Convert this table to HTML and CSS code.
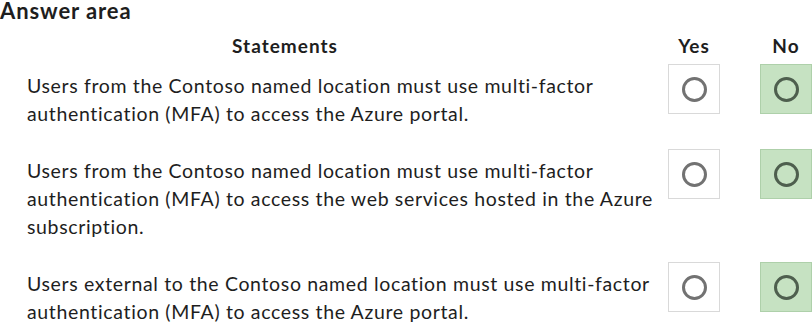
FILE: index.html
```html
<!DOCTYPE html>
<html lang="en">
<head>
<meta charset="UTF-8">
<meta name="viewport" content="width=device-width, initial-scale=1.0">
<title>Answer area</title>
<link rel="stylesheet" href="styles.css">
</head>
<body>

<h2 class="title">Answer area</h2>

<div class="answer-table">
  <div class="head head-statement">Statements</div>
  <div class="head">Yes</div>
  <div class="head">No</div>

  <div class="statement">Users from the Contoso named location must use multi-factor<br>
    authentication (MFA) to access the Azure portal.</div>
  <div class="choice"><span class="radio"></span></div>
  <div class="choice selected"><span class="radio"></span></div>

  <div class="statement">Users from the Contoso named location must use multi-factor<br>
    authentication (MFA) to access the web services hosted in the Azure<br>
    subscription.</div>
  <div class="choice"><span class="radio"></span></div>
  <div class="choice selected"><span class="radio"></span></div>

  <div class="statement">Users external to the Contoso named location must use multi-factor<br>
    authentication (MFA) to access the Azure portal.</div>
  <div class="choice"><span class="radio"></span></div>
  <div class="choice selected"><span class="radio"></span></div>
</div>

</body>
</html>
```

FILE: styles.css
```css
body {
  font-family: Lato, "Open Sans", sans-serif;
  margin: 0;
  background-color: #fff;
  color: #1e1e1e;
  font-variant-ligatures: none;
}

.title {
  font-size: 22px;
  line-height: 22px;
  margin: 0;
  letter-spacing: 0.9px;
}

.answer-table {
  display: grid;
  grid-template-columns: minmax(0, 1fr) 52px 52px;
  column-gap: 40px;
  row-gap: 21px;
  align-items: start;
  margin-top: 13px;
}

.head {
  font-size: 19px;
  font-weight: bold;
  line-height: 22px;
  letter-spacing: 1px;
  text-align: center;
  margin-bottom: -14px;
}

.head-statement {
  padding-right: 58px;
}

.statement {
  font-size: 19.5px;
  line-height: 28px;
  padding: 8px 0 0 27px;
  letter-spacing: 0.65px;
  white-space: nowrap;
}

.choice {
  height: 50px;
  border: 1px solid #d9d9d9;
  box-sizing: border-box;
  display: flex;
  justify-content: center;
  align-items: center;
}

.choice.selected {
  background-color: #c6e2c2;
  border-color: #aed0aa;
}

.radio {
  width: 25px;
  height: 25px;
  box-sizing: border-box;
  border: 3.5px solid #727272;
  border-radius: 50%;
}

.selected .radio {
  border-color: #4e5f4e;
}
```
